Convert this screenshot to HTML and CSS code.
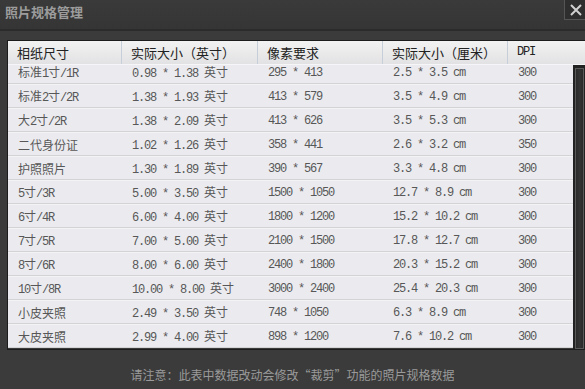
FILE: index.html
```html
<!DOCTYPE html>
<html>
<head>
  <meta charset="utf-8">
  <title>照片规格管理</title>
  <link rel="stylesheet" href="styles.css">
</head>
<body>
  <div class="titlebar">
    <span class="title">照片规格管理</span>
    <div class="close">
      <svg width="14" height="14" viewBox="0 0 14 14"><path d="M2 2 L12 12 M12 2 L2 12" stroke="#d0d0d0" stroke-width="2"/></svg>
    </div>
  </div>

  <div class="content">
    <div class="grid">
      <div class="head">
        <div class="hc">相纸尺寸</div>
        <div class="hc">实际大小（英寸）</div>
        <div class="hc">像素要求</div>
        <div class="hc">实际大小（厘米）</div>
        <div class="hc dpi">DPI</div>
      </div>
      <div class="body">
        <div class="rows">
          <div class="row"><span class="cn">标准<i>1</i>寸<i>/1R</i></span><span><i>0.98 * 1.38 </i>英寸</span><i>295 * 413</i><i>2.5 * 3.5 cm</i><i>300</i></div>
          <div class="row"><span class="cn">标准<i>2</i>寸<i>/2R</i></span><span><i>1.38 * 1.93 </i>英寸</span><i>413 * 579</i><i>3.5 * 4.9 cm</i><i>300</i></div>
          <div class="row"><span class="cn">大<i>2</i>寸<i>/2R</i></span><span><i>1.38 * 2.09 </i>英寸</span><i>413 * 626</i><i>3.5 * 5.3 cm</i><i>300</i></div>
          <div class="row"><span class="cn">二代身份证</span><span><i>1.02 * 1.26 </i>英寸</span><i>358 * 441</i><i>2.6 * 3.2 cm</i><i>350</i></div>
          <div class="row"><span class="cn">护照照片</span><span><i>1.30 * 1.89 </i>英寸</span><i>390 * 567</i><i>3.3 * 4.8 cm</i><i>300</i></div>
          <div class="row"><span class="cn"><i>5</i>寸<i>/3R</i></span><span><i>5.00 * 3.50 </i>英寸</span><i>1500 * 1050</i><i>12.7 * 8.9 cm</i><i>300</i></div>
          <div class="row"><span class="cn"><i>6</i>寸<i>/4R</i></span><span><i>6.00 * 4.00 </i>英寸</span><i>1800 * 1200</i><i>15.2 * 10.2 cm</i><i>300</i></div>
          <div class="row"><span class="cn"><i>7</i>寸<i>/5R</i></span><span><i>7.00 * 5.00 </i>英寸</span><i>2100 * 1500</i><i>17.8 * 12.7 cm</i><i>300</i></div>
          <div class="row"><span class="cn"><i>8</i>寸<i>/6R</i></span><span><i>8.00 * 6.00 </i>英寸</span><i>2400 * 1800</i><i>20.3 * 15.2 cm</i><i>300</i></div>
          <div class="row"><span class="cn"><i>10</i>寸<i>/8R</i></span><span><i>10.00 * 8.00 </i>英寸</span><i>3000 * 2400</i><i>25.4 * 20.3 cm</i><i>300</i></div>
          <div class="row"><span class="cn">小皮夹照</span><span><i>2.49 * 3.50 </i>英寸</span><i>748 * 1050</i><i>6.3 * 8.9 cm</i><i>300</i></div>
          <div class="row"><span class="cn">大皮夹照</span><span><i>2.99 * 4.00 </i>英寸</span><i>898 * 1200</i><i>7.6 * 10.2 cm</i><i>300</i></div>
        </div>
        <div class="scrollbar"><div class="thumb"></div></div>
      </div>
    </div>
  </div>

  <div class="notice">请注意：此表中数据改动会修改“裁剪”功能的照片规格数据</div>
</body>
</html>
```

FILE: styles.css
```css
body {
  margin: 0;
  width: 585px;
  height: 389px;
  overflow: hidden;
  background-color: #3b3b3b;
  font-family: "Noto Sans CJK SC", sans-serif;
  font-size: 12px;
}
.titlebar {
  height: 29px;
  display: flex;
  justify-content: space-between;
  align-items: flex-start;
  background: linear-gradient(#3a3a3a, #353535);
  border-bottom: 2px solid #2b2b2b;
}
.title {
  padding: 3px 0 0 5px;
  font-size: 13px;
  font-weight: bold;
  color: #9c9c9c;
  line-height: 18px;
}
.close {
  width: 22px;
  height: 20px;
  display: flex;
  align-items: center;
  justify-content: center;
  background: #2e2e2e;
  border-left: 1px solid #555;
  border-bottom: 1px solid #555;
  box-sizing: border-box;
  margin-right: -1px;
}
.content {
  padding: 9px 0 0 7px;
}
.grid {
  height: 308px;
  border: 1px solid #1c1c1c;
  border-right: none;
  display: flex;
  flex-direction: column;
  overflow: hidden;
}
.head {
  height: 23px;
  flex: none;
  display: grid;
  grid-template-columns: 114px 136px 125px 125px 1fr;
  background: linear-gradient(#f2f2f2, #e2e2e4);
  border-bottom: 1px solid #f6f6f8;
  position: relative;
  z-index: 1;
}
.hc {
  padding-left: 9px;
  line-height: 23px;
  font-size: 13px;
  color: #222;
  border-right: 1px solid #c6cfd9;
}
.hc.dpi {
  border-right: none;
  font-family: "Liberation Mono", monospace;
  font-size: 12px;
  letter-spacing: -1.2px;
}
.body {
  flex: 1;
  display: flex;
  overflow: hidden;
}
.rows {
  flex: 1;
  margin-top: -5px;
}
.row {
  height: 20px;
  padding-top: 2px;
  display: grid;
  grid-template-columns: 114px 136px 125px 125px 1fr;
  align-items: center;
  background-color: #ebebef;
  border-top: 1px solid #f3f3f5;
  border-bottom: 1px solid #d3d3d6;
  color: #575757;
  line-height: 16px;
  overflow: hidden;
}
.row > * {
  padding-left: 10px;
  white-space: nowrap;
}
.row i {
  font-style: normal;
  font-family: "Liberation Mono", monospace;
  font-size: 12px;
  letter-spacing: -1.2px;
}
.row span {
  font-size: 12px;
}
.cn {
  font-size: 13px;
}
.scrollbar {
  width: 12px;
  flex: none;
  background-color: #222;
  padding: 3px 1px 0 2px;
  box-sizing: border-box;
}
.thumb {
  height: 100%;
  background: linear-gradient(90deg, #2a2a2a, #333 50%, #2a2a2a);
  border: 1px solid #5a5a5a;
  box-sizing: border-box;
}
.notice {
  text-align: center;
  color: #9a9a9a;
  font-size: 12px;
  margin-top: 16px;
}
```
